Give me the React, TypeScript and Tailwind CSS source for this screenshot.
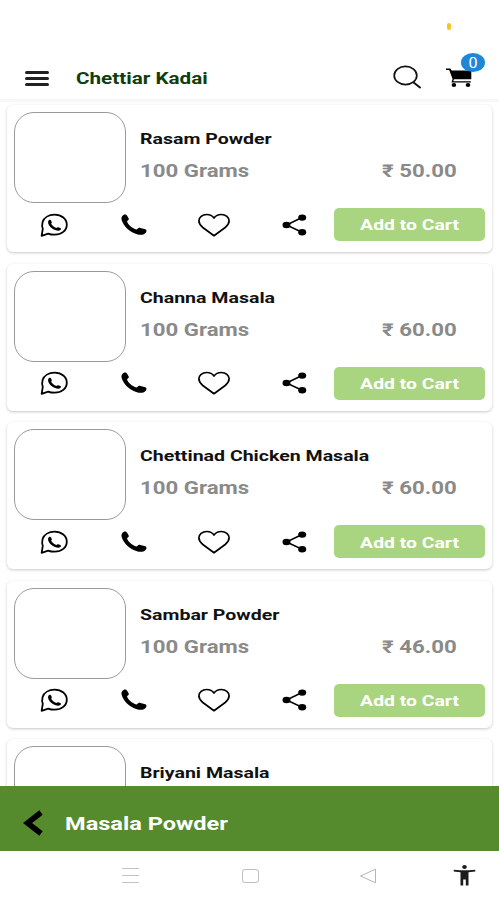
import type { ReactNode } from "react";

type Product = { name: string; weight?: string; price?: string };

const products: Product[] = [
  { name: "Rasam Powder", weight: "100 Grams", price: "50.00" },
  { name: "Channa Masala", weight: "100 Grams", price: "60.00" },
  { name: "Chettinad Chicken Masala", weight: "100 Grams", price: "60.00" },
  { name: "Sambar Powder", weight: "100 Grams", price: "46.00" },
  { name: "Briyani Masala" },
];

const WhatsappIcon = () => (
  <svg width="28" height="24" viewBox="0 0 28 24" fill="none" stroke="#000">
    <path
      d="M1.600 22.800 2.800 15.800C2 14 2 11.400 2.600 9 4 4.500 8.800 1.700 14.600 1.700c7 0 12.200 4.300 12.200 10s-5.200 10-12.200 10c-2.500 0-4.600-.3-6.400-1.100Z"
      strokeWidth="1.800"
      strokeLinejoin="round"
    />
    <path
      d="M8.800 7.300c.8-.7 1.800-.6 2.300.2l.7 1.700c.2.600-.1 1.100-.7 1.600 1.200 2 2.900 3.300 5.300 4.100.7-.7 1.200-.9 1.800-.7l2.200.9c.7.400.7 1.300 0 1.900-1.400 1-3.300.8-5.400-.1-2.900-1.200-5.200-3.100-6.400-5.500-.7-1.600-.7-3.200.2-4.100Z"
      fill="#000"
      stroke="none"
    />
  </svg>
);

const PhoneIcon = () => (
  <svg width="26" height="22" viewBox="0 0 26 22">
    <path d="M1.200 2.200C2 1.200 3.200.5 4.200.6c.8 0 1.400.4 1.900 1.100l1.500 2.500c.4.900.2 1.500-.5 2.100L6 7.300c.9 3.200 4.800 6.900 9.600 8.300l1.600-1.300c.7-.5 1.500-.6 2.300-.3l4.700 1.300c1.100.4 1.500 1.200 1.200 2.200-.4 1.400-1.600 2.500-3.200 3-1.900.6-4.400.4-7-.5C8.600 17.800 2.200 12.100.6 5.800.3 4.300.5 3.100 1.200 2.200Z" />
  </svg>
);

const HeartIcon = () => (
  <svg width="34" height="24" viewBox="0 0 34 24" fill="none" stroke="#000">
    <path
      d="M17 5C15.300 2.600 12.500 1.500 9.700 1.500 5.300 1.500 1.900 4.200 1.900 7.800c0 2.500 1.300 4.500 3.900 6.700L17 22.700l11.200-8.200c2.600-2.200 3.900-4.200 3.900-6.700 0-3.600-3.400-6.300-7.800-6.300-2.800 0-5.600 1.100-7.300 3.500Z"
      strokeWidth="1.700"
      strokeLinejoin="round"
    />
  </svg>
);

const ShareIcon = () => (
  <svg width="25" height="22" viewBox="0 0 25 22">
    <path d="M20 3.500 4.500 11 20 18.300" fill="none" stroke="#000" strokeWidth="1.500" />
    <ellipse cx="4.500" cy="11" rx="4" ry="3.200" />
    <ellipse cx="20.200" cy="3.600" rx="4" ry="3.200" />
    <ellipse cx="20.200" cy="18.200" rx="4" ry="3.200" />
  </svg>
);

const Action = ({ label, children }: { label: string; children: ReactNode }) => (
  <button aria-label={label} className="flex w-[80.250px] items-center justify-center">
    {children}
  </button>
);

const ProductCard = ({ name, weight, price }: Product) => (
  <div className="h-[147px] shrink-0 rounded-[6px] bg-white px-[7px] pt-[7px] shadow-[0_1px_3px_rgba(0,0,0,0.22)]">
    <div className="flex h-[91px]">
      <div className="w-[112px] shrink-0 rounded-[20px] border border-[#9a9a9a]" />
      <div className="flex-1 pl-[14px] pt-[16px]">
        <p className="origin-left scale-x-[1.260] whitespace-nowrap text-[15.500px] font-bold leading-[22px] text-[#111]">
          {name}
        </p>
        {price && (
          <div className="mt-[9px] flex justify-between pr-[28px] text-[17.500px] font-bold leading-[24px] text-[#8a8a8a]">
            <span className="origin-left scale-x-[1.270] whitespace-nowrap">{weight}</span>
            <span className="origin-right scale-x-[1.270] whitespace-nowrap">₹ {price}</span>
          </div>
        )}
      </div>
    </div>
    {price && (
      <div className="mt-[5px] flex h-[33px]">
        <Action label="WhatsApp">
          <WhatsappIcon />
        </Action>
        <Action label="Call">
          <PhoneIcon />
        </Action>
        <Action label="Favourite">
          <HeartIcon />
        </Action>
        <Action label="Share">
          <ShareIcon />
        </Action>
        <button className="flex w-[151px] shrink-0 items-center justify-center rounded-[5px] bg-[#aad580] pt-[3px] text-white">
          <span className="scale-x-[1.250] whitespace-nowrap text-[15.500px] font-bold">Add to Cart</span>
        </button>
      </div>
    )}
  </div>
);

const Header = () => (
  <header className="flex h-[99px] shrink-0 flex-col bg-white">
    <div className="flex h-[53px] justify-end pr-[48px] pt-[23px]">
      <span className="h-[7px] w-[4px] rounded-[2px] bg-[#f7c51e]" />
    </div>
    <div className="flex h-[46px] pl-[25px]">
      <button aria-label="Menu" className="flex h-[33px] w-[24px] flex-col justify-end gap-[3px]">
        <span className="h-[3px] w-full rounded-full bg-[#222]" />
        <span className="h-[3px] w-full rounded-full bg-[#222]" />
        <span className="h-[3px] w-full rounded-full bg-[#222]" />
      </button>
      <h1 className="ml-[27px] mt-[15px] origin-left scale-x-[1.290] whitespace-nowrap text-[16px] font-bold leading-[22px] text-[#123d0c]">
        Chettiar Kadai
      </h1>
      <div className="ml-auto flex pr-[14px]">
        <button aria-label="Search" className="mr-[24px] mt-[12px] h-[24px] w-[29px]">
          <svg width="29" height="24" viewBox="0 0 29 24" fill="none" stroke="#111">
            <ellipse cx="12.500" cy="10.500" rx="11.300" ry="9.100" strokeWidth="1.700" />
            <path d="m20.300 17.300 7.300 5.700" strokeWidth="2" />
          </svg>
        </button>
        <button aria-label="Cart" className="relative h-[35px] w-[39px]">
          <svg className="mt-[15px]" width="27" height="20" viewBox="0 0 27 20">
            <path d="M0 .6h4.400l1.200 1.900h19.700v8.800H8l-.8 2h17.600v1.200H5.500l1.100-3.400L3.200 1.900H0Z" />
            <ellipse cx="7.900" cy="17" rx="2.300" ry="2" />
            <ellipse cx="22" cy="17" rx="2.300" ry="2" />
          </svg>
          <span className="absolute left-[15px] top-0 flex h-[19px] w-[24px] items-center justify-center rounded-[50%] bg-[#1f86d8] text-[14px] leading-none text-white">
            <span className="scale-x-[1.150]">0</span>
          </span>
        </button>
      </div>
    </div>
  </header>
);

const CategoryBar = () => (
  <div className="flex h-[65px] shrink-0 items-center bg-[#558b2d] pl-[23px]">
    <svg className="mt-[9px]" width="22" height="26" viewBox="0 0 22 26" fill="none" stroke="#000">
      <path d="M18 2.500 4.500 13l13.500 10.500" strokeWidth="5.500" />
    </svg>
    <h2 className="ml-[20px] mt-[10px] origin-left scale-x-[1.240] whitespace-nowrap text-[19px] font-bold leading-[24px] text-white">
      Masala Powder
    </h2>
  </div>
);

const SystemNav = () => (
  <nav className="flex h-[49px] shrink-0 items-center bg-white pl-[122px]">
    <div className="flex w-[17px] flex-col gap-[6px]">
      <span className="h-px bg-[#c4c4c4]" />
      <span className="h-px bg-[#c4c4c4]" />
      <span className="h-px bg-[#c4c4c4]" />
    </div>
    <span className="ml-[103px] h-[14px] w-[17px] rounded-[3px] border border-[#bdbdbd]" />
    <svg className="ml-[100px]" width="18" height="16" viewBox="0 0 18 16" fill="none" stroke="#b5b5b5">
      <path d="M16.500 1.200v13.600L1.500 8Z" />
    </svg>
    <svg className="ml-[76px]" width="23" height="21" viewBox="0 0 23 21" fill="#1c1c1c">
      <ellipse cx="11.500" cy="2" rx="2.300" ry="1.900" />
      <path d="M.7 4.800 7 5.300h9l6.300-.5v1.600l-6.800.9v13.200h-2.700v-6h-2.600v6H7.500V7.300L.7 6.400Z" />
    </svg>
  </nav>
);

export default function App() {
  return (
    <div className="flex h-[900px] w-[499px] flex-col overflow-hidden bg-white font-['Roboto','Noto_Sans',sans-serif]">
      <Header />
      <main className="flex h-[687px] shrink-0 flex-col gap-[11.600px] overflow-hidden border-t-[3px] border-[#f7f7f7] bg-white px-[7px] pt-[3px]">
        {products.map((product) => (
          <ProductCard key={product.name} {...product} />
        ))}
      </main>
      <CategoryBar />
      <SystemNav />
    </div>
  );
}
